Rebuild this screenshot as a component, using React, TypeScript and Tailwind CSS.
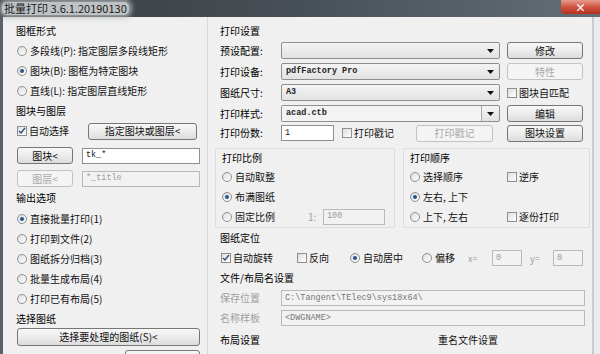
import type { ReactNode } from 'react';

const MONO = "font-['Liberation_Mono',monospace]";

function Arrow() {
  return (
    <svg width="7" height="4" viewBox="0 0 7 4" className="shrink-0">
      <path d="M0 0h7L3.5 4z" fill="#111" />
    </svg>
  );
}

function Radio({ checked = false, label, disabled = false, className = '' }: { checked?: boolean; label: ReactNode; disabled?: boolean; className?: string }) {
  return (
    <div className={`flex items-center gap-[3px] shrink-0 ${className}`}>
      <span className="w-[10px] h-[10px] rounded-full border border-[#8e8f8f] bg-linear-to-br from-[#dcdcdc] to-white flex items-center justify-center shrink-0">
        {checked && <span className="w-[4px] h-[4px] rounded-full bg-[#23558f]" />}
      </span>
      <span className={disabled ? 'text-[#a0a0a0]' : 'text-[#111]'}>{label}</span>
    </div>
  );
}

function Check({ checked = false, label, className = '' }: { checked?: boolean; label: ReactNode; className?: string }) {
  return (
    <div className={`flex items-center gap-[2px] shrink-0 ${className}`}>
      <span className="w-[10px] h-[10px] border border-[#8e8f8f] bg-linear-to-br from-[#dedede] to-white flex items-center justify-center shrink-0">
        {checked && (
          <svg width="8" height="8" viewBox="0 0 8 8">
            <path d="M1 4l2 2 4-5" stroke="#33507a" strokeWidth="1.4" fill="none" />
          </svg>
        )}
      </span>
      <span className="text-[#111]">{label}</span>
    </div>
  );
}

function Btn({ children, disabled = false, className = '' }: { children?: ReactNode; disabled?: boolean; className?: string }) {
  return (
    <div
      className={`h-[17px] rounded-[3px] border flex items-center justify-center shrink-0 ${
        disabled
          ? 'border-[#c2c2c2] bg-[#f4f4f4] text-[#a8a8a8]'
          : 'border-[#777] bg-linear-to-b from-[#f7f7f7] via-[#ececec] to-[#dcdcdc] text-[#111]'
      } ${className}`}
    >
      {children}
    </div>
  );
}

function Combo({ value = '', split = false }: { value?: string; split?: boolean }) {
  return (
    <div className="w-[219px] h-[17px] rounded-[2px] border border-[#8e8f8f] bg-linear-to-b from-[#f4f4f4] to-[#e2e2e2] flex items-center shrink-0 overflow-hidden">
      <span className={`flex-1 pl-[4px] text-[8.5px] font-bold text-[#222] ${MONO} ${split ? 'bg-[#f3f3f3] h-full flex items-center border-r border-[#a9a9a9]' : ''}`}>
        {value}
      </span>
      <span className="w-[17px] flex items-center justify-center">
        <Arrow />
      </span>
    </div>
  );
}

function Field({ value = '', disabled = false, className = '' }: { value?: string; disabled?: boolean; className?: string }) {
  return (
    <div
      className={`h-[16px] border flex items-center pl-[3px] shrink-0 overflow-hidden whitespace-nowrap text-[8.5px] ${MONO} ${
        disabled ? 'border-[#b9b9b9] bg-[#f2f2f2] text-[#9a9a9a]' : 'border-[#8f8f8f] bg-white text-[#222]'
      } ${className}`}
    >
      {value}
    </div>
  );
}

function Row({ h, children, className = '' }: { h: string; children: ReactNode; className?: string }) {
  return <div className={`flex items-center shrink-0 ${h} ${className}`}>{children}</div>;
}

export default function App() {
  return (
    <div className="w-[600px] h-[354px] overflow-hidden bg-[#f0f0f0] flex flex-col text-[10px] leading-none font-['Noto_Sans_CJK_SC','Liberation_Sans',sans-serif]">
      {/* title bar */}
      <div className="h-[17px] shrink-0 flex items-start justify-between bg-linear-to-r from-[#363b40] via-[#485057] to-[#646e77]">
        <div className="mt-[2px] ml-[2px] px-[2px] h-[13px] flex items-center rounded-[5px] bg-[#bfc2c5] shadow-[0_0_5px_3px_rgba(180,184,187,0.8)] text-[11px] text-[#1c1c1c]">
          批量打印 3.6.1.20190130
        </div>
        <div className="w-[39px] h-[14px] rounded-bl-[4px] bg-linear-to-b from-[#e59a8c] via-[#cf5441] to-[#b7301f] flex items-center justify-center text-white text-[11px] font-bold">
          ×
        </div>
      </div>

      {/* body */}
      <div className="flex-1 flex border-l-[3px] border-[#5a6168] min-h-0">
        {/* left column */}
        <div className="w-[205px] shrink-0 flex flex-col pl-[14px] pr-[6px] pt-[4px] border-r border-[#d8d8d8]">
          <Row h="h-[20px]" className="-ml-[1px]">图框形式</Row>
          <Row h="h-[20px]"><Radio label="多段线(P): 指定图层多段线矩形" /></Row>
          <Row h="h-[20px]"><Radio checked label="图块(B): 图框为特定图块" /></Row>
          <Row h="h-[20px]"><Radio label="直线(L): 指定图层直线矩形" /></Row>
          <Row h="h-[19px]" className="-ml-[1px]">图块与图层</Row>
          <Row h="h-[22px]">
            <Check checked label="自动选择" className="w-[71px]" />
            <Btn className="w-[109px]">指定图块或图层&lt;</Btn>
          </Row>
          <Row h="h-[17px]" className="mt-[5px] gap-[9px]">
            <Btn className="w-[56px]">图块&lt;</Btn>
            <Field value="tk_*" className="w-[118px]" />
          </Row>
          <Row h="h-[17px]" className="mt-[6px] gap-[9px]">
            <Btn disabled className="w-[56px]">图层&lt;</Btn>
            <Field disabled value="*_title" className="w-[118px]" />
          </Row>
          <Row h="h-[22px]" className="-ml-[1px]">输出选项</Row>
          <Row h="h-[20px]"><Radio checked label="直接批量打印(1)" /></Row>
          <Row h="h-[20px]"><Radio label="打印到文件(2)" /></Row>
          <Row h="h-[20px]"><Radio label="图纸拆分归档(3)" /></Row>
          <Row h="h-[20px]"><Radio label="批量生成布局(4)" /></Row>
          <Row h="h-[20px]"><Radio label="打印已有布局(5)" /></Row>
          <Row h="h-[19px]" className="-ml-[1px]">选择图纸</Row>
          <Btn className="w-[183px] h-[18px]">选择要处理的图纸(S)&lt;</Btn>
          <Btn className="w-[75px] ml-[108px] mt-[4px]" />
        </div>

        {/* right column */}
        <div className="w-[386px] shrink-0 flex flex-col pl-[7px] pt-[4px] border-r-[2px] border-[#c9cdd1]">
          <Row h="h-[19px]" className="pl-[5px]">打印设置</Row>
          <Row h="h-[21px]" className="pl-[5px]">
            <span className="w-[61px]">预设配置:</span>
            <Combo />
            <Btn className="w-[76px] ml-[7px]">修改</Btn>
          </Row>
          <Row h="h-[21px]" className="pl-[5px]">
            <span className="w-[61px]">打印设备:</span>
            <Combo value="pdfFactory Pro" />
            <Btn disabled className="w-[76px] ml-[7px]">特性</Btn>
          </Row>
          <Row h="h-[21px]" className="pl-[5px]">
            <span className="w-[61px]">图纸尺寸:</span>
            <Combo value="A3" />
            <Check label="图块自匹配" className="ml-[7px]" />
          </Row>
          <Row h="h-[21px]" className="pl-[5px]">
            <span className="w-[61px]">打印样式:</span>
            <Combo value="acad.ctb" split />
            <Btn className="w-[76px] ml-[7px]">编辑</Btn>
          </Row>
          <Row h="h-[18px]" className="pl-[5px]">
            <span className="w-[61px]">打印份数:</span>
            <Field value="1" className="w-[53px] h-[15px]" />
            <Check label="打印戳记" className="ml-[8px] w-[74px]" />
            <Btn disabled className="w-[77px]">打印戳记</Btn>
            <Btn className="w-[76px] ml-[14px]">图块设置</Btn>
          </Row>

          {/* scale + order groups */}
          <div className="flex gap-[8px] mt-[6px] h-[80px] shrink-0">
            <div className="w-[180px] border border-[#dcdcdc] rounded-[2px] flex flex-col pl-[6px]">
              <Row h="h-[18px]">打印比例</Row>
              <Row h="h-[20px]"><Radio label="自动取整" /></Row>
              <Row h="h-[20px]"><Radio checked label="布满图纸" /></Row>
              <Row h="h-[19px]">
                <Radio label="固定比例" className="w-[86px]" />
                <span className="w-[15px] text-[#a0a0a0]">1:</span>
                <Field disabled value="100" className="w-[62px] h-[15px]" />
              </Row>
            </div>
            <div className="w-[187px] border border-[#dcdcdc] rounded-[2px] flex flex-col pl-[6px]">
              <Row h="h-[18px]">打印顺序</Row>
              <Row h="h-[20px]">
                <Radio label="选择顺序" className="w-[97px]" />
                <Check label="逆序" />
              </Row>
              <Row h="h-[20px]"><Radio checked label="左右, 上下" /></Row>
              <Row h="h-[19px]">
                <Radio label="上下, 左右" className="w-[97px]" />
                <Check label="逐份打印" />
              </Row>
            </div>
          </div>

          <Row h="h-[20px]" className="pl-[5px]">图纸定位</Row>
          <Row h="h-[20px]" className="pl-[6px]">
            <Check checked label="自动旋转" className="w-[76px]" />
            <Check label="反向" className="w-[53px]" />
            <Radio checked label="自动居中" className="w-[72px]" />
            <Radio label="偏移" className="w-[46px]" />
            <span className="w-[24px] text-[#a0a0a0] text-[9px]">x=</span>
            <Field disabled value="0" className="w-[30px]" />
            <span className="w-[23px] ml-[8px] text-[#a0a0a0] text-[9px]">y=</span>
            <Field disabled value="0" className="w-[30px]" />
          </Row>
          <Row h="h-[20px]" className="pl-[5px]">文件/布局名设置</Row>
          <Row h="h-[20px]" className="pl-[5px]">
            <span className="w-[61px] text-[#a0a0a0]">保存位置</span>
            <Field disabled value="C:\Tangent\TElec9\sys18x64\" className="w-[304px] text-[#777]" />
          </Row>
          <Row h="h-[20px]" className="pl-[5px]">
            <span className="w-[61px] text-[#a0a0a0]">名称样板</span>
            <Field disabled value="<DWGNAME>" className="w-[304px] text-[#777]" />
          </Row>
          <Row h="h-[24px]" className="pl-[5px]">
            <span className="w-[61px]">布局设置</span>
            <span className="ml-[157px] text-[#111]">重名文件设置</span>
          </Row>
        </div>
        <div className="flex-1 bg-[#e9ebec]" />
      </div>
    </div>
  );
}
